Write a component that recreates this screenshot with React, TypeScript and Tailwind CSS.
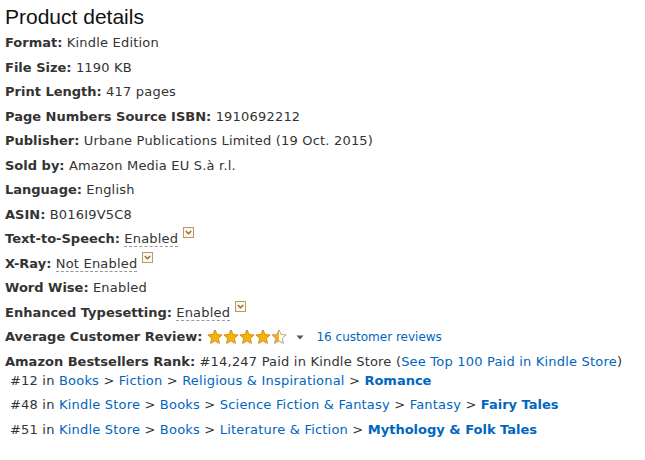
import React from "react";

function Popover() {
  return (
    <svg width="11" height="11" viewBox="0 0 11 11" className="inline-block ml-[5px] align-[5px]">
      <rect x="0.5" y="0.5" width="10" height="10" fill="#fdf8ea" stroke="#b49b68" />
      <path d="M2.8 4 L5.5 6.8 L8.2 4" fill="none" stroke="#8a6d33" strokeWidth="1.4" />
    </svg>
  );
}

function Star({ half }: { half?: boolean }) {
  const id = half ? "halfStar" : undefined;
  return (
    <svg width="16" height="16" viewBox="0 0 16 16" className="inline-block">
      {half && (
        <defs>
          <linearGradient id="halfStar" x1="0" x2="1" y1="0" y2="0">
            <stop offset="50%" stopColor="#f5b30a" />
            <stop offset="50%" stopColor="#ffffff" />
          </linearGradient>
        </defs>
      )}
      <polygon
        points="8,0.9 10.1,5.5 15.1,6 11.3,9.3 12.4,14.4 8,11.8 3.6,14.4 4.7,9.3 0.9,6 5.9,5.5"
        fill={half ? `url(#${id})` : "#f5b30a"}
        stroke={half ? "#b9a27a" : "#d68d0b"}
        strokeWidth="1"
        strokeLinejoin="round"
      />
    </svg>
  );
}

function Row({ label, children }: { label: string; children: React.ReactNode }) {
  return (
    <li className="leading-[24.5px] whitespace-nowrap">
      <b className="font-bold tracking-normal">{label}</b> {children}
    </li>
  );
}

const link = "text-[#0066c0]";
const sep = <span className="text-[#333]"> &gt; </span>;

export default function App() {
  return (
    <div className="w-[645px] h-[460px] bg-white text-[#333] px-[5px] overflow-hidden">
      <h2 className="font-['Liberation_Sans',Arial,sans-serif] text-[21px] leading-[28px] pt-[3px] text-[#111]">
        Product details
      </h2>
      <ul className="font-['DejaVu_Sans',Verdana,sans-serif] text-[13px] tracking-[0.2px]">
        <Row label="Format:">Kindle Edition</Row>
        <Row label="File Size:">1190 KB</Row>
        <Row label="Print Length:">417 pages</Row>
        <Row label="Page Numbers Source ISBN:">1910692212</Row>
        <Row label="Publisher:">Urbane Publications Limited (19 Oct. 2015)</Row>
        <Row label="Sold by:">Amazon Media EU S.à r.l.</Row>
        <Row label="Language:">English</Row>
        <Row label="ASIN:">B016I9V5C8</Row>
        <Row label="Text-to-Speech:">
          <span className="border-b border-dashed border-[#999] leading-[14px] inline-block">Enabled</span>
          <Popover />
        </Row>
        <Row label="X-Ray:">
          {" "}
          <span className="border-b border-dashed border-[#999] leading-[14px] inline-block">Not Enabled</span>
          <Popover />
        </Row>
        <Row label="Word Wise:">Enabled</Row>
        <Row label="Enhanced Typesetting:">
          <span className="border-b border-dashed border-[#999] leading-[14px] inline-block">Enabled</span>
          <Popover />
        </Row>
        <li className="leading-[24.5px] whitespace-nowrap flex items-center">
          <b className="font-bold tracking-normal">Average Customer Review:</b>
          <span className="ml-[5px] flex items-center">
            <Star />
            <Star />
            <Star />
            <Star />
            <Star half />
          </span>
          <svg width="8" height="5" viewBox="0 0 8 5" className="ml-[9px] mr-[12px]">
            <path d="M0.5 0.5 L7.5 0.5 L4 4.5 Z" fill="#555" />
          </svg>
          <span className={`${link} text-[12px] tracking-normal`}>16 customer reviews</span>
        </li>
        <li className="leading-[24.5px] whitespace-nowrap">
          <b className="font-bold tracking-normal">Amazon Bestsellers Rank:</b> #14,247 Paid in Kindle Store (
          <span className={link}>See Top 100 Paid in Kindle Store</span>)
        </li>
        <li className="-mt-[5.5px]">
          <ul className="pl-[5px]">
            <li className="leading-[24.5px] whitespace-nowrap">
              #12 in <span className={link}>Books</span>
              {sep}
              <span className={link}>Fiction</span>
              {sep}
              <span className={link}>Religious &amp; Inspirational</span>
              {sep}
              <b className={`${link} font-bold tracking-normal`}>Romance</b>
            </li>
            <li className="leading-[24.5px] whitespace-nowrap">
              #48 in <span className={link}>Kindle Store</span>
              {sep}
              <span className={link}>Books</span>
              {sep}
              <span className={link}>Science Fiction &amp; Fantasy</span>
              {sep}
              <span className={link}>Fantasy</span>
              {sep}
              <b className={`${link} font-bold tracking-normal`}>Fairy Tales</b>
            </li>
            <li className="leading-[24.5px] whitespace-nowrap">
              #51 in <span className={link}>Kindle Store</span>
              {sep}
              <span className={link}>Books</span>
              {sep}
              <span className={link}>Literature &amp; Fiction</span>
              {sep}
              <b className={`${link} font-bold tracking-normal`}>Mythology &amp; Folk Tales</b>
            </li>
          </ul>
        </li>
      </ul>
    </div>
  );
}
